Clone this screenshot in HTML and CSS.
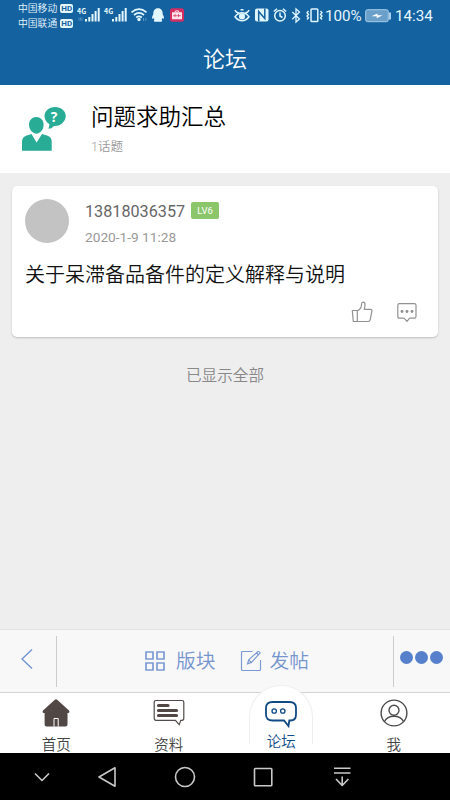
FILE: index.html
```html
<!DOCTYPE html>
<html lang="zh-CN">
<head>
<meta charset="utf-8">
<title>论坛</title>
<link rel="stylesheet" href="styles.css">
</head>
<body>
<div class="phone">
  <header class="header">
    <div class="status">
      <div class="carriers">
        <div class="carrier">中国移动<span class="hd">HD</span></div>
        <div class="carrier">中国联通<span class="hd">HD</span></div>
      </div>
      <svg class="signals" width="108" height="20" viewBox="77 5 108 20">
        <g fill="#e4f7ff">
          <text class="net" x="77" y="13.500">4G</text>
          <text class="net" x="104" y="13.500">4G</text>
          <path d="M85 19h2v2.500h-2zM88.300 17h2v4.500h-2zM91.500 14h2v7.500h-2zM94.600 11h2v10.500h-2zM97.700 8h2v13.500h-2z"/>
          <path d="M112 19h2v2.500h-2zM115.300 17h2v4.500h-2zM118.500 14h2v7.500h-2zM121.600 11h2v10.500h-2zM124.700 8h2v13.500h-2z"/>
          <circle cx="139" cy="19.500" r="1.700"/>
          <path d="M158 8.200c-3.400 0-4.700 2.500-4.700 6-.8 1.500-1.600 3.200-1.100 4.500.6.200 1-.2 1.400-.6.200.7.500 1.200.9 1.600-1 .6-.8 2 .4 2h6.200c1.200 0 1.400-1.400.4-2 .4-.4.700-.9.900-1.600.4.400.8.800 1.400.6.500-1.300-.3-3-1.100-4.500 0-3.500-1.300-6-4.700-6z"/>
        </g>
        <path d="M79 17.500v3.500M82 21v-3.500M80.500 17.500v3" stroke="#5e9bc8" stroke-width=".8"/>
        <path d="M131.500 12.300q7.500-6.500 15 0M134 15q5-4.200 10 0M136.200 17.500q2.800-2.200 5.600 0" fill="none" stroke="#e4f7ff" stroke-width="1.700"/>
        <path d="M143.500 18v3M145.800 18v3" stroke="#5e9bc8" stroke-width=".9"/>
        <rect x="170" y="8.200" width="14" height="13.500" rx="2.500" fill="#d32e62"/>
        <path d="M172 12.200h2.500q0-2 2.500-2t2.500 2h2.500v7h-10z" fill="#ffe3e8"/>
        <path d="M175.500 12.200q1.500-1.500 3 0M173 15.700h8M175 14v3M178.500 14v3" fill="none" stroke="#d32e62" stroke-width=".7"/>
      </svg>
      <svg class="devices" width="92" height="20" viewBox="233 5 92 20" fill="none" stroke="#dff6ff" stroke-width="1.500">
        <path d="M234.800 10.200q1.600 2.600 3.800 2.900M249.200 10.200q-1.600 2.600-3.800 2.900M235 16.800q3-4 7-4t7 4q-3 4-7 4t-7-4z"/>
        <circle cx="242" cy="16.400" r="2.300" fill="#dff6ff"/>
        <path d="M240.500 9.800h3"/>
        <rect x="255" y="8.500" width="13.500" height="13" rx="2" fill="#dff6ff" stroke="none"/>
        <path d="M258.700 21.500V11.500l6.100 7V8.500" stroke="#14629f" stroke-width="1.500"/>
        <circle cx="280" cy="15.700" r="5.300"/>
        <path d="M280 12.500v3.500l2.500 1.500M273.800 11.500l3.300-2.800M286.200 11.500l-3.300-2.800"/>
        <path d="M292.300 12l7.200 7-3.500 3V9l3.500 3-7.200 7.300" stroke-width="1.300"/>
        <rect x="311" y="9" width="6.800" height="12.500" rx=".8"/>
        <path d="M308.500 11l-1.500 1.700 1.500 1.700-1.500 1.700 1.500 1.700-1.500 1.700M320.500 11l1.500 1.700-1.500 1.700 1.500 1.700-1.500 1.700 1.500 1.700" stroke-width="1.400"/>
      </svg>
      <span class="percent">100%</span>
      <svg class="battery" width="27" height="14" viewBox="0 0 27 14">
        <rect x=".7" y=".7" width="22.600" height="12" rx="1.800" fill="#699fc9" stroke="#a4cdeb"/>
        <path d="M6.500 7.300l6-2.800v1.800h5l-5.800 3V7.300z" fill="#fff"/>
        <path d="M25 3.500v7" stroke="#d0eaff" stroke-width="1.600"/>
      </svg>
      <span class="clock">14:34</span>
    </div>
    <h1 class="title">论坛</h1>
  </header>

  <section class="board">
    <svg class="board-icon" width="46" height="46" viewBox="21 106 46 46">
      <g fill="#28ac96">
        <path d="M22 150.800v-9q0-4.500 4-6l5.500-1.800 5.100 8.500L42 134l5.700 1.800q4 1.500 4 6v9z"/>
        <path d="M36.300 117c4.200 0 7.300 3.500 7.300 7.500 0 3-1 5.500-3.200 7.500q-4 3.500-8 0c-2.200-2-3.400-4.500-3.400-7.500 0-4 3.100-7.500 7.300-7.500z"/>
        <path d="M55 107c6.200 0 10.800 4 10.800 9s-5 10-10.800 10q-2 0-3.500 2.200l-3 .5 1-4.500c-3-1.800-5-4.500-5-8.200 0-5 4.500-9 10.500-9z"/>
      </g>
      <text class="question" x="50.700" y="121.500">?</text>
    </svg>
    <div class="board-text">
      <h2 class="board-name">问题求助汇总</h2>
      <p class="board-count">1话题</p>
    </div>
  </section>

  <main class="feed">
    <article class="card">
      <div class="author">
        <div class="avatar"></div>
        <div class="meta">
          <div class="user"><span class="name">13818036357</span><span class="level">LV6</span></div>
          <time class="time">2020-1-9 11:28</time>
        </div>
      </div>
      <h3 class="topic">关于呆滞备品备件的定义解释与说明</h3>
      <div class="actions">
        <svg width="22" height="22" viewBox="0 0 22 22" fill="none" stroke="#929292" stroke-width="1.200" stroke-linejoin="round">
          <path d="M6.300 10c3-1.500 4.200-3.500 4.200-6.500 0-3.200 3.500-3.200 3.500.2 0 1.600-.3 3-.8 4.600h6.300q1.700.2 1.400 1.800l-1.700 8.500q-.3 1.900-2 1.900H2.300L1.300 9.500h5v11"/>
        </svg>
        <svg width="22" height="22" viewBox="0 0 22 22" fill="none" stroke="#929292" stroke-width="1.200" stroke-linejoin="round">
          <path d="M3.500 2.600h14.800q1.700 0 1.700 1.700v11.200q0 1.700-1.700 1.700h-4.700L11 20.300l-3-3.100H3.500q-1.700 0-1.700-1.700V4.300q0-1.700 1.700-1.700z"/>
          <g fill="#8d8d8d" stroke="none"><circle cx="6" cy="10.500" r="1.400"/><circle cx="11" cy="10.500" r="1.400"/><circle cx="16" cy="10.500" r="1.400"/></g>
        </svg>
      </div>
    </article>
    <p class="end">已显示全部</p>
  </main>

  <div class="toolbar">
    <div class="back">
      <svg width="14" height="22" viewBox="0 0 14 22" fill="none" stroke="#6d91cf" stroke-width="1.300"><path d="M12 1.500L2 11l10 9.500"/></svg>
    </div>
    <div class="tools">
      <div class="tool">
        <svg width="22" height="22" viewBox="0 0 22 22" fill="none" stroke="#7c9bd4" stroke-width="1.700"><path d="M2 2h7v7H2zM13 2h7v7h-7zM2 13h7v7H2zM13 13h7v7h-7z"/></svg>
        <span>版块</span>
      </div>
      <div class="tool">
        <svg width="22" height="22" viewBox="0 0 22 22" fill="none" stroke="#7c9bd4" stroke-width="1.200"><path d="M12.500 1.500h-10Q1.500 1.500 1.500 2.500v17q0 1 1 1h17q1 0 1-1V10M7.500 13.800l1.200-4 9.200-8.200q1.600-.5 2.300 1.300l-8.700 9.500zM8.700 10l2.700 2.400M16.500 3l2.300 2"/></svg>
        <span>发帖</span>
      </div>
    </div>
    <div class="more"><i></i><i></i><i></i></div>
  </div>

  <nav class="tabs">
    <div class="tab">
      <svg width="30" height="30" viewBox="0 0 30 30"><path d="M15 1.200q-.8 0-1.500.7L1.800 12.700q-.8 1.700.8 2.200h1v11.600q0 2 2 2h18.900q2 0 2-2V14.900h.9q1.700-.5.8-2.200L16.500 1.900q-.7-.7-1.500-.7z" fill="#514745"/><path d="M13 28.500v-8h4.200v8" fill="none" stroke="#fff"/></svg>
      <span>首页</span>
    </div>
    <div class="tab">
      <svg width="32" height="30" viewBox="0 0 32 30"><path d="M3 2.500h26q1.800 0 1.800 1.800v16q0 2-1.800 2h-1.200l-1.600 4.300-3.800-4.300H3q-1.800 0-1.800-2v-16q0-1.800 1.800-1.800z" fill="#fff" stroke="#514c4a" stroke-width="1.200"/><path d="M5.500 7.500H15M5.500 12.500h18M5.500 17.500h18" stroke="#514745" stroke-width="3.200" stroke-linecap="round"/></svg>
      <span>资料</span>
    </div>
    <div class="tab tab-active">
      <div class="bump">
        <svg width="34" height="30" viewBox="0 0 34 30" fill="none" stroke="#104a84"><path d="M8.500 3h17q6.500 0 6.500 6v6.500q0 6-5.500 6h-1.200l-.8 5.500-4.500-5.500H8.500q-6.500 0-6.500-6V9q0-6 6.500-6z" stroke-width="1.800"/><circle cx="10.200" cy="12" r="2.200" stroke-width="1.300"/><circle cx="18.800" cy="12" r="2.200" stroke-width="1.300"/></svg>
        <span>论坛</span>
      </div>
    </div>
    <div class="tab">
      <svg width="30" height="30" viewBox="0 0 30 30" fill="none" stroke="#4c4c4c" stroke-width="1.400"><circle cx="15" cy="15" r="12.900"/><circle cx="15" cy="12.200" r="5"/><path d="M5.500 23.500q2.500-5.300 9.500-5.300t9.500 5.300"/></svg>
      <span>我</span>
    </div>
  </nav>

  <div class="system">
    <svg width="18" height="24" viewBox="0 0 18 24"><path d="M2 8.500l7 7 7-7"/></svg>
    <svg width="20" height="24" viewBox="0 0 20 24"><path d="M18 2.800v18.500L2 12z"/></svg>
    <svg width="24" height="24" viewBox="0 0 24 24"><circle cx="12" cy="12" r="9.500"/></svg>
    <svg width="20" height="24" viewBox="0 0 20 24"><rect x="1.500" y="3.500" width="17.300" height="17.300" rx=".8"/></svg>
    <svg width="20" height="24" viewBox="0 0 20 24"><path d="M2 3.300h16.500M2 8h16.500M10.200 11.500V20M4 14l6.200 6.500 6.200-6.500"/></svg>
  </div>
</div>
</body>
</html>
```
FILE: styles.css
```css
* { box-sizing: border-box; margin: 0; padding: 0; }
body {
  width: 450px;
  height: 800px;
  overflow: hidden;
  font-family: Roboto, "Noto Sans CJK SC", sans-serif;
  font-weight: 350;
}
svg { display: block; flex: none; }
.phone {
  height: 800px;
  display: grid;
  grid-template-rows: 85px 88px 456px 63px 61px 47px;
  background: #eee;
}

.header { background: #14629f; color: #fff; }
.status { display: flex; height: 31px; padding-left: 18px; color: #e6f6ff; }
.carriers { width: 59px; }
.carrier {
  display: flex;
  align-items: center;
  height: 15px;
  font-size: 9.8px;
  font-weight: 350;
  white-space: nowrap;
}
.hd {
  margin: 1px 0 0 3px;
  width: 13px;
  height: 9px;
  border-radius: 2px;
  background: #e4f6ff;
  color: #14629f;
  font-size: 8px;
  font-weight: 700;
  line-height: 9px;
  text-align: center;
}
.signals { margin-top: 5px; }
.net { font-family: "Noto Sans CJK SC", sans-serif; font-size: 7px; font-weight: 700; }
.devices { margin: 5px 0 0 48px; }
.percent, .clock { font-size: 15.2px; font-weight: 400; line-height: 32px; white-space: nowrap; }
.percent { width: 37px; }
.battery { margin: 9px 0 0 3px; }
.clock { margin-left: 3px; }
.title { margin-top: 11px; font-size: 22px; font-weight: 350; line-height: 36px; text-align: center; }

.board { display: flex; padding: 21px 0 0 21px; background: #fff; }
.board-text { margin-left: 24px; margin-top: -7px; }
.question { fill: #fff; font-family: "Open Sans", sans-serif; font-size: 14px; font-weight: 700; }
.board-name { color: #000; font-size: 22.5px; font-weight: 350; line-height: 36px; }
.board-count { margin-top: 2px; color: #999; font-size: 12.5px; line-height: 20px; }

.feed { padding: 13px 12px 0; }
.card {
  height: 151px;
  padding: 13px 13px 0;
  border-radius: 5px;
  background: #fff;
  box-shadow: 0 1px 2px rgba(0, 0, 0, .2);
}
.author { display: flex; }
.avatar { width: 44px; height: 44px; border-radius: 50%; background: #c3c3c3; }
.meta { margin-left: 16px; }
.user { display: flex; align-items: center; height: 24px; }
.name { color: #666; font-size: 16.2px; font-weight: 400; }
.level {
  width: 28px;
  height: 17px;
  margin: -1px 0 0 6px;
  border-radius: 2px;
  background: #8bc66b;
  color: #fff;
  font-size: 9.5px;
  font-weight: 400;
  line-height: 17px;
  text-align: center;
}
.time { display: block; color: #999; font-size: 13.7px; font-weight: 400; line-height: 28px; }
.topic { margin-top: 6px; color: #111; font-size: 20px; font-weight: 350; line-height: 36px; white-space: nowrap; }
.actions { display: flex; justify-content: flex-end; gap: 23px; margin: 8px 7px 0 0; }
.end { margin-top: 25px; color: #888; font-size: 15.6px; line-height: 28px; text-align: center; }

.toolbar {
  display: grid;
  grid-template-columns: 57px 336px 57px;
  padding: 6px 0;
  border-top: 1px solid #e2e2e2;
  background: #f8f8f8;
}
.back { padding: 12px 0 0 20px; border-right: 1px solid #ccc; }
.tools { display: flex; gap: 24px; padding-left: 87px; color: #7695cf; font-size: 19.800px; line-height: 51px; }
.tool { display: flex; gap: 10px; }
.tool + .tool { gap: 8px; }
.tool svg { margin-top: 14px; }
.more { display: flex; gap: 2px; padding: 15px 0 0 6px; border-left: 1px solid #ccc; }
.more i { width: 13px; height: 13px; border-radius: 50%; background: #5680cb; }

.tabs {
  display: grid;
  grid-template-columns: repeat(4, 1fr);
  border-top: 1px solid #d2d2d2;
  background: #fff;
  color: #444;
  font-size: 14.5px;
  line-height: 22px;
}
.tab { display: flex; flex-direction: column; align-items: center; padding-top: 5px; }
.tab span { margin-top: 7px; }
.tab-active { padding-top: 0; color: #104f8a; }
.bump {
  display: flex;
  flex-direction: column;
  align-items: center;
  width: 64px;
  height: 59px;
  margin-top: -8px;
  padding-top: 13px;
  border: solid #efefef;
  border-width: 1px 1px 0;
  border-radius: 32px 32px 0 0;
  background: #fff;
}
.bump span { margin-top: 3px; }

.system { display: flex; padding: 12px 0 0 33px; background: #000; }
.system svg { fill: none; stroke: #c9c9c9; stroke-width: 1.6; stroke-linejoin: round; }
.system svg:nth-child(2) { margin-left: 46px; }
.system svg:nth-child(3) { margin-left: 56px; }
.system svg:nth-child(4) { margin-left: 56px; }
.system svg:nth-child(5) { margin-left: 59px; }
```
